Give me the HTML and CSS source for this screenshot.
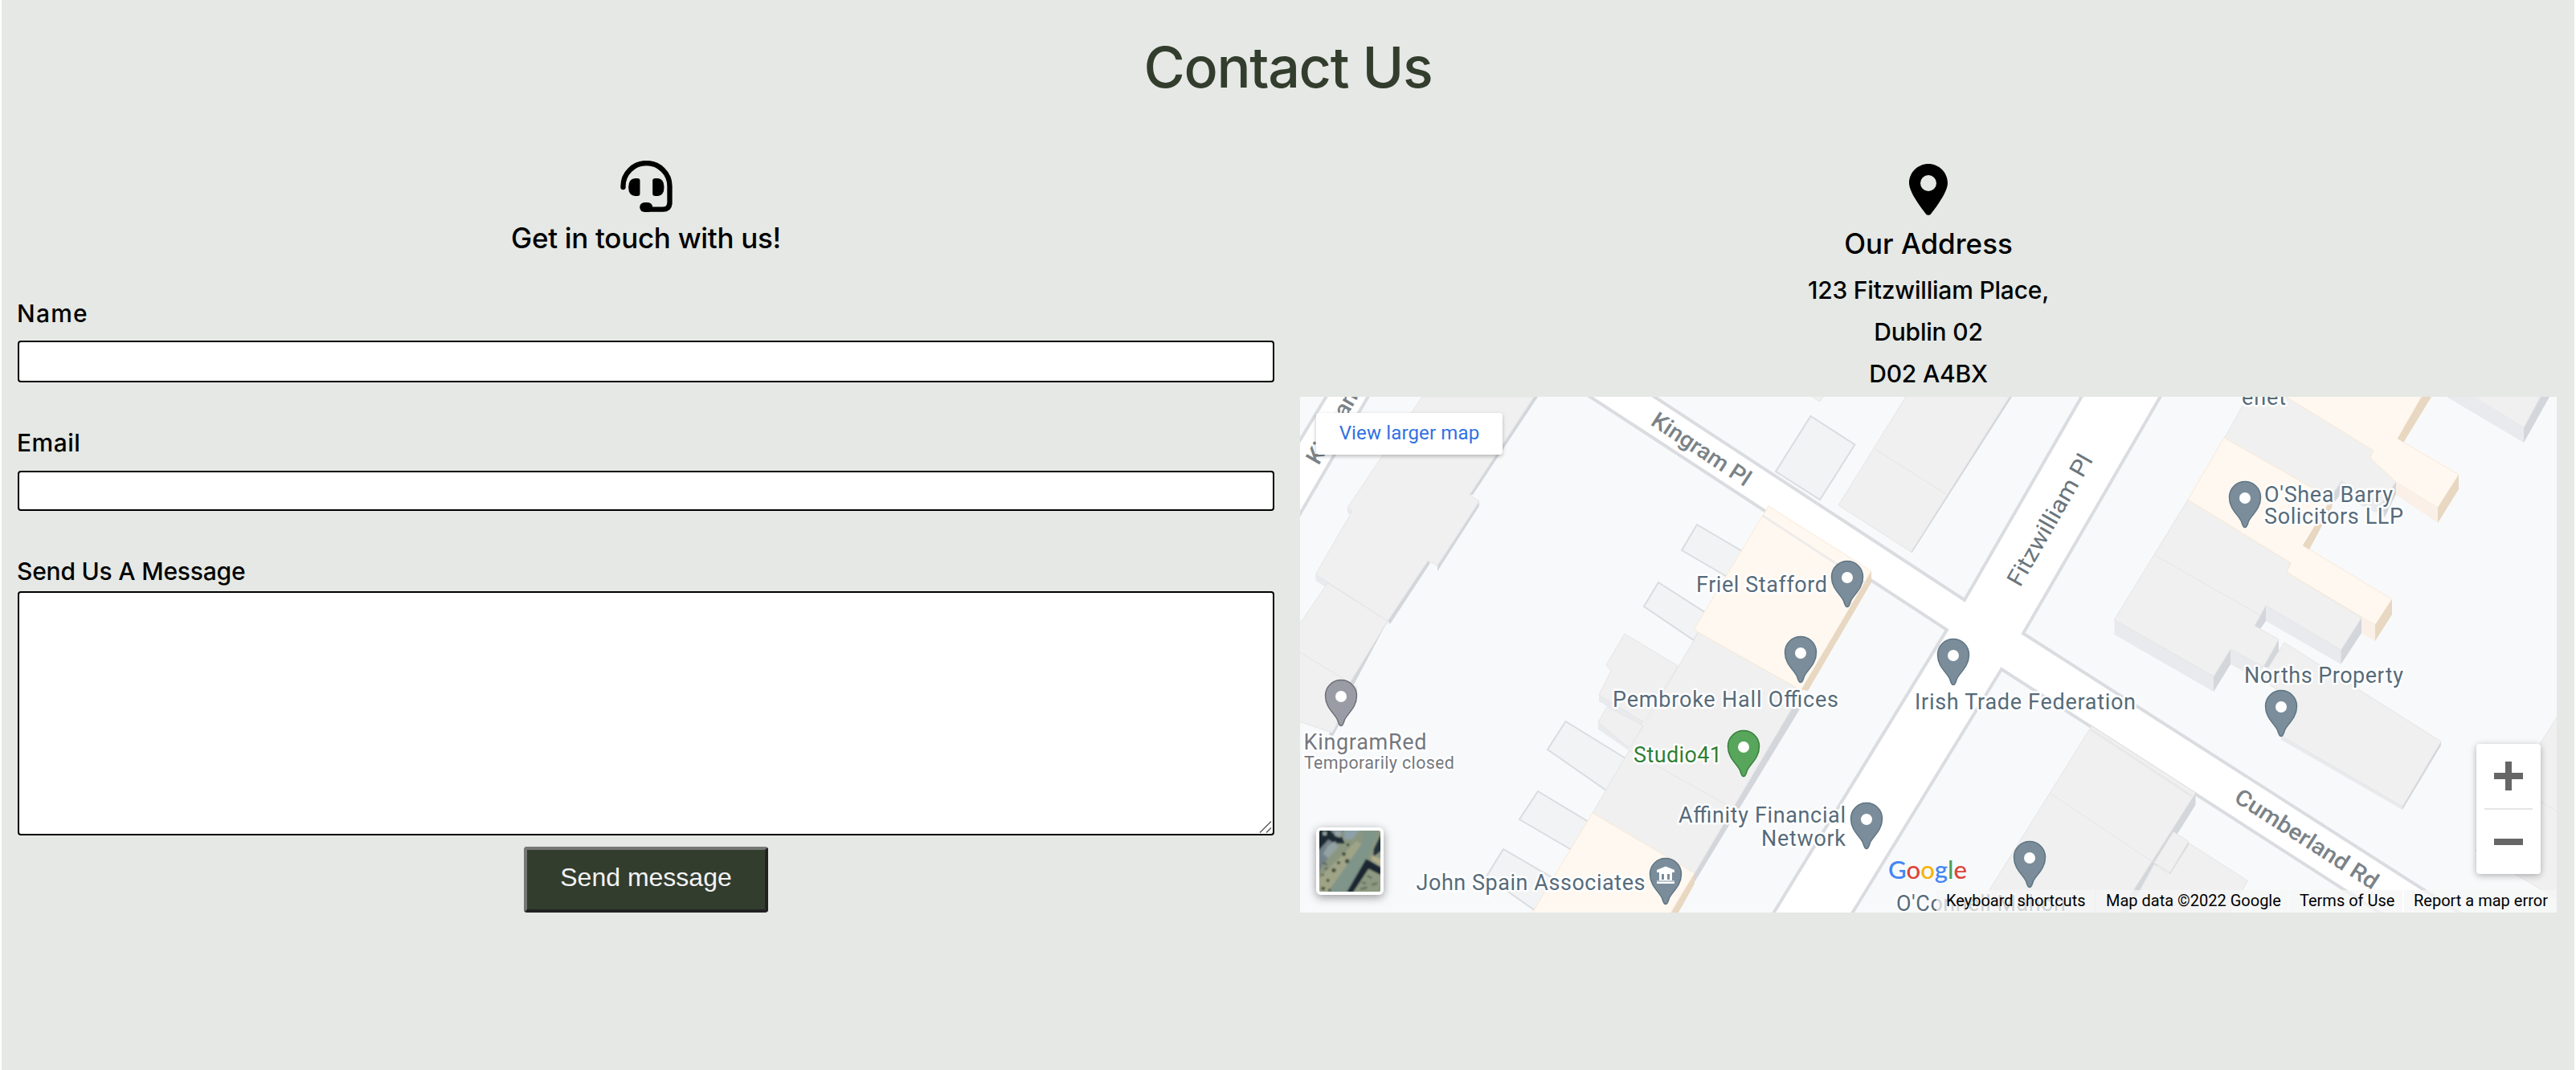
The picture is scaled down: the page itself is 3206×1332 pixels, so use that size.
FILE: index.html
```html
<!DOCTYPE html>
<html lang="en">
<head>
<meta charset="utf-8">
<title>Contact Us</title>
<link rel="stylesheet" href="styles.css">
</head>
<body>
<main class="contact">
  <h1 class="title">Contact Us</h1>
  <div class="columns">
    <section class="col">
      <svg class="icon headset" viewBox="94 60 194 192" aria-hidden="true">
        <path d="M104 159V155A87 86 0 0 1 278 155V216Q278 242 252 242H196" fill="none" stroke="#000" stroke-width="19" stroke-linecap="round"/>
        <rect x="166" y="216" width="48" height="36" rx="18"/>
        <path d="M148 126H158Q167 126 167 135V183Q167 192 158 192H148Q124 190 124 159Q124 128 148 126Z"/>
        <path d="M234 126H224Q214 126 214 135V183Q214 192 224 192H234Q257 190 257 159Q257 128 234 126Z"/>
      </svg>
      <h2 class="subtitle touch">Get in touch with us!</h2>
      <form class="form">
        <label class="label name" for="name">Name</label>
        <input class="field field-name" id="name" type="text">
        <label class="label email" for="email">Email</label>
        <input class="field field-email" id="email" type="email">
        <label class="label message" for="message">Send Us A Message</label>
        <div class="area-wrap">
          <textarea class="field area" id="message"></textarea>
          <svg class="grip" viewBox="0 0 16 16" aria-hidden="true"><path d="M1 15.500L15 1.500M9 15.500L15 9.500" stroke="#555" stroke-width="1.300"/></svg>
        </div>
        <button class="send" type="button">Send message</button>
      </form>
    </section>
    <section class="col col-address">
      <svg class="icon pin" viewBox="0 0 384 512" aria-hidden="true"><path fill-rule="evenodd" d="M215.700 499.200C267 435 384 279.400 384 192C384 86 298 0 192 0S0 86 0 192c0 87.400 117 243 168.300 307.200c12.300 15.300 35.100 15.300 47.400 0zM192 112a80 80 0 1 1 0 160a80 80 0 1 1 0-160z"/></svg>
      <h2 class="subtitle our">Our Address</h2>
      <address class="address">
        <span>123 Fitzwilliam Place,</span>
        <span>Dublin 02</span>
        <span>D02 A4BX</span>
      </address>
      <div class="map">
        <svg class="canvas" viewBox="0 0 1564 642">
          <defs>
            <g id="mark">
              <path d="M0 57.500C-2.500 57.500-3 54-4.500 50C-8 42-19.500 35-19.500 20A19.500 19.500 0 0 1 19.500 20C19.500 35 8 42 4.500 50C3 54 2.500 57.500 0 57.500Z" stroke-width="1.500"/>
            </g>
            <g id="poi"><use href="#mark"/><circle cy="21" r="7" fill="#fff" stroke="none"/></g>
          </defs>
          <rect width="1564" height="642" fill="#fff"/>
          <g class="block">
            <path d="M-6-6H36L0 54L-6 63Z"/>
            <path d="M88-6H352L805 290L586 648H-6V156Z"/>
            <path d="M432-6H976L827 253Z"/>
            <path d="M1074-6H1570V648H1452L900 294.500Z"/>
            <path d="M873 339L684 648H1353Z"/>
          </g>
          <g class="shed">
            <path d="M494 159L555 195L535 226L475 191Z"/>
            <path d="M446 231L510 272L490 303L428 261Z"/>
            <path d="M330.500 404L410 453L385.500 493L308 439Z"/>
            <path d="M296 491L364 532L343 567L273 526Z"/>
            <path d="M253 563L318 601L296 642L232 597Z"/>
            <path d="M635.500 24L690.500 59.500L647 128L592 93Z"/>
          </g>
          <g class="front">
            <path d="M59 138L65 142L63 147L59 144ZM19.500 221L109 279V284L19.500 229Z"/>
            <path d="M372 371L428 405L424 411L372 379ZM371 405L409 430V440L371 414Z"/>
            <path d="M1427 0H1460L1523 38.500V57ZM1202 259.500L1295.500 315V333L1202 279ZM1158 314L1199 336L1190 350L1158 333ZM1013.500 277.500L1137 348V367L1013.500 296ZM1221 422L1372 510V514L1221 427ZM1296 105L1350 134V150L1296 122Z"/>
          </g>
          <g class="side">
            <path d="M291 0H296L215 122H211ZM223 130V136L171 217V210ZM159 204L162 207L112 283L109 279ZM109 279L66 360L60 354L104 279ZM71 361V367L40 424L36 420Z"/>
            <path d="M613 380L623 387L491 604V593Z"/>
            <path d="M883 0H886L761 195V192Z"/>
            <path d="M1544 0H1555L1523 57V38.500ZM1321 275V294L1295.500 333V315ZM1202 259.500V279L1195 289L1188 285ZM1218 302V318L1208 338L1199 336ZM1158 314V333L1137 367V348ZM1420 429V434L1372 514V510ZM1368 99L1364 121L1350 150L1346 133ZM1296 105L1293 124L1280 140V126Z"/>
            <path d="M1114.500 493V508L1028 646L1016 646ZM1106 553V557L1083 594H1080Z"/>
          </g>
          <g class="roof">
            <path d="M152 0H291L211 122L223 130L171 210L159 204L109 279L19.500 221L65 142L59 138Z"/>
            <path d="M-2 285L34 232L109 279L62 356L-2 317Z"/>
            <path d="M-2 317L62 356L71 361L40 418L-2 404Z"/>
            <path d="M404 295L470.500 335L428 405L372 371L387 341L381 334Z"/>
            <path d="M382 386L427 409L409.500 437L371 405Z"/>
            <path d="M496 293L625 366L491 593L364 518Z"/>
            <path d="M409 440L542 514" fill="none"/>
            <path d="M755-2H884L760.500 193L670 135ZM715.500 65L804 121"/>
            <path d="M636-1L647 6L652-1Z"/>
            <path d="M1180-1H1226L1336 67L1332 76L1368 99L1346 133L1296 105L1282 126L1150 52Z"/>
            <path d="M1105 128L1233 207L1227 218L1321 275L1295.500 315L1202 259.500L1188 285L1218 302L1199 336L1158 314L1137 348L1013.500 277.500ZM1063.500 197L1195 272"/>
            <path d="M1225 306L1420 429L1372 510L1221 422L1243 382L1206 358L1200 345Z"/>
            <path d="M1460-1H1544L1523 38.500Z"/>
            <path d="M1566 396L1543 432L1463 565L1566 626ZM1544 504L1566 517"/>
            <path d="M985 410L1114.500 493L1017 646H838ZM933 493L1082 593"/>
            <path d="M1087 541.500L1106 553.500L1083 592L1063 580ZM1107 556L1179.500 602.500L1155 646H1028L1063 582L1083 594Z"/>
          </g>
          <g class="cream">
            <path d="M583 136L711 217L625 366L490 290Z"/>
            <path d="M364 518L491 593L460 644H288Z"/>
            <path d="M1226-1H1396L1366 52L1442 97L1416 138L1364 106L1332 76L1336 67Z"/>
            <path d="M1150 51L1282 126V134L1248 185L1359 252L1338 284L1227.500 218L1233.500 207L1105 128Z"/>
          </g>
          <path fill="#faf0e8" d="M1364 106L1416 138V157L1364 122ZM1321 275L1338 284V304L1321 294Z"/>
          <path fill="#e8d7c1" d="M711 217V231L632 366L624 364ZM491 593V606L471 642H462ZM1396 0H1408L1373.500 56.500L1366 52ZM1442 97V115L1416 157V138ZM1279 134L1285 136L1256 190L1248 185ZM1359 252V271L1338 304V284Z"/>
          <path d="M576 148L706 233M984 414L1110 497" stroke="#e4e4e4" stroke-width="3" opacity=".6"/>

          <g class="road">
            <text transform="translate(23 86) rotate(-60)" textLength="148" lengthAdjust="spacingAndGlyphs">Kingram Ln</text>
            <text transform="translate(435 34) rotate(33.500)" textLength="142" lengthAdjust="spacingAndGlyphs">Kingram Pl</text>
            <text class="main" transform="translate(896 238) rotate(-60.200)" textLength="184" lengthAdjust="spacingAndGlyphs">Fitzwilliam Pl</text>
            <text transform="translate(1161 503) rotate(32.600)" textLength="206" lengthAdjust="spacingAndGlyphs">Cumberland Rd</text>
          </g>
          <g class="place">
            <text x="493" y="243" textLength="163">Friel Stafford</text>
            <text x="389" y="385.500" textLength="281">Pembroke Hall Offices</text>
            <text x="415" y="455" textLength="110" class="green">Studio41</text>
            <text x="471" y="530" textLength="208">Affinity Financial</text>
            <text x="574" y="558.500" textLength="105">Network</text>
            <text x="144.500" y="614" textLength="285">John Spain Associates</text>
            <text x="4.500" y="439" textLength="153" class="closed">KingramRed</text>
            <text x="5" y="462.500" textLength="187" class="closed small">Temporarily closed</text>
            <text x="765" y="388.500" textLength="275">Irish Trade Federation</text>
            <text x="742" y="640" textLength="211">O'Connell Mahon</text>
            <text x="1200" y="130.500" textLength="160">O'Shea Barry</text>
            <text x="1200" y="158" textLength="173">Solicitors LLP</text>
            <text x="1175" y="356" textLength="198">Norths Property</text>
            <text x="1172" y="9.500" textLength="55">enet</text>
          </g>
          <g fill="#7b8d9a" stroke="#5e7583">
            <use href="#poi" x="681" y="204"/><use href="#poi" x="623" y="298"/>
            <use href="#poi" x="813" y="301"/><use href="#poi" x="705" y="505"/>
            <use href="#poi" x="908" y="553"/><use href="#poi" x="1176" y="105"/>
            <use href="#poi" x="1221" y="365"/><use href="#mark" x="455" y="574"/>
          </g>
          <use href="#poi" x="552" y="415" fill="#58a55c" stroke="#35803b"/>
          <use href="#poi" x="51" y="352" fill="#9a9ca5" stroke="#6e7077"/>
          <path fill="#fff" d="M455 584.500L466 589V592H463V602H466V606H444V602H447V592H444V589ZM450 594V601H453V594ZM457 594V601H460V594Z"/>
          <path d="M444 603H466" stroke="#7b8d9a"/>
          <text class="google" x="732" y="600" textLength="98" lengthAdjust="spacingAndGlyphs"><tspan fill="#4285f4">G</tspan><tspan fill="#db4437">o</tspan><tspan fill="#f4b400">o</tspan><tspan fill="#4285f4">g</tspan><tspan fill="#4b9f5a">l</tspan><tspan fill="#db4437">e</tspan></text>
        </svg>
        <a class="larger">View larger map</a>
        <div class="satellite">
          <svg viewBox="66 72 228 228">
            <defs><filter id="soft"><feGaussianBlur stdDeviation="3"/></filter></defs>
            <rect x="66" y="72" width="228" height="228" fill="#8b9680"/>
            <g filter="url(#soft)">
              <path d="M60 65H160L130 130L60 230Z" fill="#73828a"/>
              <path d="M60 65H100L125 90L150 95L160 120L120 118L100 105L60 150Z" fill="#1d2a31"/>
              <path d="M120 72H150L145 98L125 92ZM78 76H95L92 90H80ZM98 128L125 112L135 135L100 175L80 160Z" fill="#93a2a2"/>
              <path d="M160 65H220L190 105H160Z" fill="#8ba0a8"/>
              <path d="M205 110L60 255V305H95L225 125Z" fill="#a0a487"/>
              <path d="M232 70H285L250 165L165 305H95L225 120Z" fill="#7f9589"/>
              <path d="M300 80V145L268 168L270 140Z" fill="#20303b"/>
              <path d="M240 178L296 210V240L250 215L192 302H168Z" fill="#1c2733"/>
              <path d="M250 215L300 240V305H192Z" fill="#8e9982"/>
              <path d="M260 165L300 180V205L262 182Z" fill="#b3ae8c"/>
              <g fill="#3c4a38"><circle cx="158" cy="160" r="7"/><circle cx="170" cy="186" r="8"/><circle cx="138" cy="192" r="6"/><circle cx="120" cy="220" r="8"/><circle cx="98" cy="258" r="6"/><circle cx="80" cy="288" r="7"/><circle cx="104" cy="294" r="5"/><circle cx="173" cy="125" r="5"/></g>
              <path d="M225 265L240 270M245 240L262 250M262 275L282 268M220 290L245 284M78 190L95 200M85 215L98 212M72 240L84 236" stroke="#596454" stroke-width="6"/>
            </g>
          </svg>
        </div>
        <div class="zoom">
          <svg viewBox="0 0 80 162"><path fill="#666" d="M36 22h8v14h14v8h-14v14h-8v-14h-14v-8h14zM22 118h36v8h-36z"/><path fill="#e6e6e6" d="M10 80h60v2h-60z"/></svg>
        </div>
        <div class="credits">
          <span class="c1">Keyboard shortcuts</span><span class="c2">Map data ©2022 Google</span><span class="c3">Terms of Use</span><span class="c4">Report a map error</span>
        </div>
      </div>
    </section>
  </div>
</main>
</body>
</html>
```
FILE: styles.css
```css
* { box-sizing: border-box; }
body { margin: 0; background: #fff; font-family: Inter, "Liberation Sans", sans-serif; color: #000; }
.contact { height: 1332px; margin: 0 2px; padding-top: 40px; background: #e5e8e4; overflow: hidden; }
.title { margin: 0; height: 160px; line-height: 88px; text-align: center; font-size: 70px; font-weight: 500; color: #333d2e; letter-spacing: -1.300px; }
.columns { display: grid; grid-template-columns: 1564px 1564px; gap: 32px; padding-left: 20px; }
.col { display: flex; flex-direction: column; align-items: center; }
.col-address { padding-top: 4px; }
.icon { display: block; height: 64px; flex: none; }
.headset { width: 65px; }
.pin { width: 48px; }
.subtitle { margin: 10px 0 0; font-size: 35px; line-height: 44px; font-weight: 500; white-space: nowrap; }
.touch { letter-spacing: -.300px; }
.our { margin-top: 13px; }
.form { width: 100%; display: flex; flex-direction: column; }
.label { font-size: 30px; line-height: 40px; font-weight: 500; align-self: flex-start; margin-left: -1px; }
.name { margin-top: 52px; letter-spacing: 1.200px; }
.email { margin-top: 55px; letter-spacing: .500px; }
.message { margin-top: 55px; letter-spacing: -.200px; }
.field { width: 100%; margin: 0; border: 2px solid #000; border-radius: 4px; background: #fff; }
.field-name { height: 52px; margin-top: 14px; }
.field-email { height: 50px; margin-top: 15px; }
.area-wrap { position: relative; margin-top: 5px; }
.area { height: 304px; display: block; resize: none; }
.grip { position: absolute; right: 3px; bottom: 3px; width: 16px; height: 16px; }
.send { align-self: center; width: 304px; height: 82px; margin-top: 14px; padding: 0 0 6px; border: 4px solid; border-color: #767876 #222320 #222223 #767876; border-radius: 4px; background: #333d2e; color: #f3f3f5; font: 32px "Liberation Sans", Arial, sans-serif; }
.address { display: flex; flex-direction: column; align-items: center; margin-top: 10px; font-style: normal; font-weight: 500; font-size: 30px; line-height: 52px; letter-spacing: -.200px; }
.map { position: relative; width: 1564px; height: 642px; margin-top: 3px; overflow: hidden; font-family: Roboto, sans-serif; }
.canvas { display: block; width: 1564px; height: 642px; }
.block { fill: #f8f9fb; stroke: #dadce0; stroke-width: 4; }
.shed { fill: #f1f3f4; stroke: #dadce0; stroke-width: 2; }
.front { fill: #e9eaed; }
.side { fill: #d3d6db; }
.roof { fill: #f0f0f0; stroke: #e5e5e6; stroke-width: 1; }
.cream { fill: #fef8f1; stroke: #fae9d3; stroke-width: 1; }
.road { font-size: 28px; font-weight: 500; fill: #7b8287; stroke: #fff; stroke-width: 3; paint-order: stroke; }
.road .main { font-size: 29px; font-weight: 400; fill: #6a757c; }
.place { font-size: 27px; fill: #566b7a; stroke: #fff; stroke-width: 5; stroke-linejoin: round; paint-order: stroke; }
.place .green { fill: #2f7f37; }
.place .closed { fill: #74777e; }
.place .small { font-size: 21.500px; }
.google { font: 500 31px Lato, sans-serif; }
.larger { position: absolute; left: 20px; top: 20px; width: 232px; height: 52px; line-height: 51px; text-align: center; border-radius: 4px; background: #fff; color: #3071e2; font-size: 24px; letter-spacing: .150px; box-shadow: 0 2px 5px rgba(0,0,0,.25); }
.satellite { position: absolute; left: 20px; top: 536px; width: 84px; height: 84px; padding: 4px; border-radius: 6px; background: #fff; box-shadow: 0 3px 12px rgba(0,0,0,.4); }
.satellite svg { display: block; width: 76px; height: 76px; border-radius: 2px; }
.zoom { position: absolute; left: 1464px; top: 432px; width: 80px; height: 162px; border-radius: 4px; background: #fff; box-shadow: 0 2px 8px rgba(0,0,0,.3); }
.zoom svg { display: block; }
.credits { position: absolute; right: 0; bottom: 0; display: flex; gap: 2px; height: 28px; font-size: 20px; line-height: 27px; color: #000; white-space: nowrap; }
.credits span { background: rgba(245,245,245,.75); padding-left: 12px; }
.c1 { width: 197px; }
.c2 { width: 239px; }
.c3 { width: 140px; }
.c4 { width: 190px; }
```
